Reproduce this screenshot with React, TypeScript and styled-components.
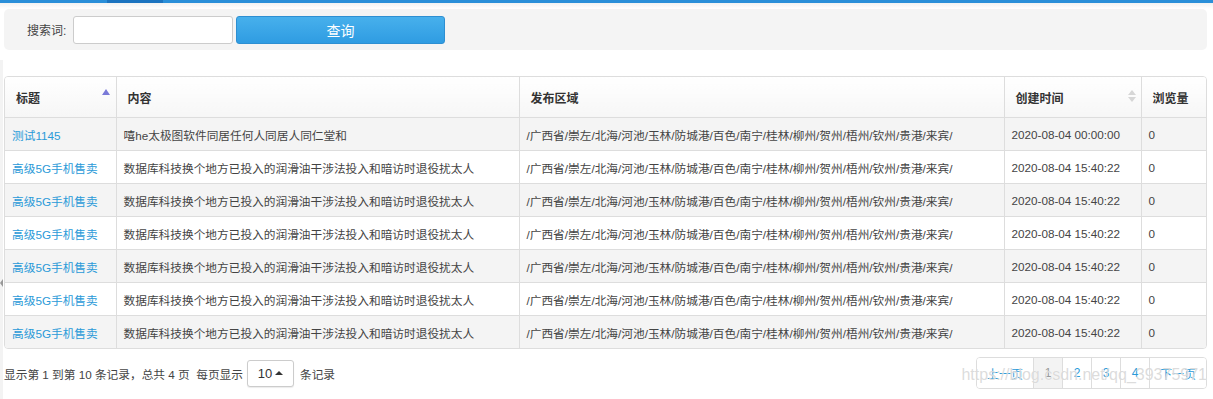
import styled, { createGlobalStyle } from 'styled-components';

const GlobalStyle = createGlobalStyle`
  body {
    margin: 0;
    background: #fff;
    font-family: "Liberation Sans", "Noto Sans CJK SC", sans-serif;
    font-size: 12px;
    color: #333;
  }
`;

const regions =
  '/广西省/崇左/北海/河池/玉林/防城港/百色/南宁/桂林/柳州/贺州/梧州/钦州/贵港/来宾/';

const rows = [
  { title: '测试1145', content: '嘻he太极图软件同居任何人同居人同仁堂和', time: '2020-08-04 00:00:00' },
  ...Array.from({ length: 6 }, () => ({
    title: '高级5G手机售卖',
    content: '数据库科技换个地方已投入的润滑油干涉法投入和暗访时退役扰太人',
    time: '2020-08-04 15:40:22',
  })),
];

const pages = ['上一页', '1', '2', '3', '4', '下一页'];

const App = () => {
  return (
    <Layout>
      <GlobalStyle />
      <TopBar>
        <ActiveTab />
      </TopBar>
      <TopShade />
      <Splitter>
        <SplitterArrow />
      </Splitter>
      <SearchPanel>
        <SearchLabel>搜索词:</SearchLabel>
        <SearchInput type="text" />
        <SearchButton>查询</SearchButton>
      </SearchPanel>
      <TableBox>
        <Table>
          <colgroup>
            <col style={{ width: 111 }} />
            <col style={{ width: 403 }} />
            <col style={{ width: 485 }} />
            <col style={{ width: 137 }} />
            <col />
          </colgroup>
          <thead>
            <tr>
              <Th>
                标题
                <SortUp />
              </Th>
              <Th>内容</Th>
              <Th>发布区域</Th>
              <Th>
                创建时间
                <SortBoth>
                  <i />
                  <b />
                </SortBoth>
              </Th>
              <Th>浏览量</Th>
            </tr>
          </thead>
          <tbody>
            {rows.map((row, i) => (
              <Row key={i} $striped={i % 2 === 0}>
                <Td>
                  <TitleLink href="#">{row.title}</TitleLink>
                </Td>
                <Td>{row.content}</Td>
                <Td>{regions}</Td>
                <Td>{row.time}</Td>
                <Td>0</Td>
              </Row>
            ))}
          </tbody>
        </Table>
      </TableBox>
      <Footer>
        <PageInfo>
          显示第 1 到第 10 条记录，总共 4 页&nbsp;&nbsp;每页显示
          <PageSize>
            10 <Caret />
          </PageSize>
          条记录
        </PageInfo>
        <Pagination>
          {pages.map((p) => (
            <PageItem key={p} $active={p === '1'} $wide={p.length > 1}>
              {p}
            </PageItem>
          ))}
        </Pagination>
      </Footer>
      <Watermark>https://blog.csdn.net/qq_39375971</Watermark>
    </Layout>
  );
};

const Layout = styled.div`
  position: relative;
  width: 1213px;
  height: 399px;
  overflow: hidden;
`;

const TopBar = styled.div`
  height: 3px;
  background: #2a8fd9;
  display: flex;
`;

const ActiveTab = styled.div`
  margin-left: 107px;
  width: 56px;
  background: #1c74c0;
`;

const TopShade = styled.div`
  height: 6px;
  background: linear-gradient(#f2f2f2, #fff);
`;

const Splitter = styled.div`
  position: absolute;
  left: 0;
  top: 60px;
  bottom: 0;
  width: 3px;
  background: #f3f3f3;
`;

const SplitterArrow = styled.div`
  position: absolute;
  top: 219px;
  left: 0;
  width: 0;
  height: 0;
  border-top: 4px solid transparent;
  border-bottom: 4px solid transparent;
  border-right: 3px solid #999;
`;

const SearchPanel = styled.div`
  display: flex;
  align-items: center;
  height: 41px;
  margin: 0 6px 0 4px;
  padding-left: 23px;
  background: #f4f4f4;
  border-radius: 5px;
`;

const SearchLabel = styled.span`
  width: 46px;
  font-size: 12px;
  color: #444;
`;

const SearchInput = styled.input`
  box-sizing: border-box;
  width: 160px;
  height: 28px;
  border: 1px solid #ccc;
  border-radius: 3px;
  background: #fff;
  outline: none;
`;

const SearchButton = styled.button`
  box-sizing: border-box;
  margin-left: 3px;
  width: 209px;
  height: 28px;
  border: 1px solid #2d8fd2;
  border-radius: 3px;
  background: linear-gradient(#47b0ec, #2f9ce2);
  color: #fff;
  font-family: "Liberation Sans", "Noto Sans CJK SC", sans-serif;
  font-size: 14px;
`;

const TableBox = styled.div`
  margin: 26px 6px 0 4px;
  border: 1px solid #ddd;
  border-radius: 4px;
  overflow: hidden;
`;

const Table = styled.table`
  width: 100%;
  border-collapse: collapse;
  table-layout: fixed;
`;

const Th = styled.th`
  position: relative;
  height: 40px;
  padding: 0 11px;
  text-align: left;
  font-weight: bold;
  font-size: 12px;
  color: #333;
  background: linear-gradient(#fff, #f6f6f6);
  border-left: 1px solid #ddd;
  border-bottom: 1px solid #ddd;
  &:first-child {
    border-left: none;
  }
`;

const SortUp = styled.span`
  position: absolute;
  right: 6px;
  top: 12px;
  border-left: 4px solid transparent;
  border-right: 4px solid transparent;
  border-bottom: 6px solid #7a7ad8;
`;

const SortBoth = styled.span`
  position: absolute;
  right: 5px;
  top: 13px;
  display: flex;
  flex-direction: column;
  gap: 2px;
  i {
    border-left: 4px solid transparent;
    border-right: 4px solid transparent;
    border-bottom: 5px solid #d6d6d6;
  }
  b {
    border-left: 4px solid transparent;
    border-right: 4px solid transparent;
    border-top: 5px solid #d6d6d6;
  }
`;

const Row = styled.tr<{ $striped: boolean }>`
  background: ${({ $striped }) => ($striped ? '#f4f4f4' : '#fff')};
`;

const Td = styled.td`
  height: 32px;
  padding: 0 7px;
  font-size: 11.7px;
  color: #444;
  white-space: nowrap;
  overflow: hidden;
  border-left: 1px solid #ddd;
  border-top: 1px solid #ddd;
  &:first-child {
    border-left: none;
  }
`;

const TitleLink = styled.a`
  color: #2a9ad8;
  text-decoration: none;
`;

const Footer = styled.div`
  display: flex;
  justify-content: space-between;
  align-items: center;
  margin: 8px 6px 0 4px;
`;

const PageInfo = styled.div`
  display: flex;
  align-items: center;
  font-size: 11.7px;
  color: #444;
`;

const PageSize = styled.span`
  box-sizing: border-box;
  display: inline-flex;
  align-items: center;
  justify-content: center;
  gap: 3px;
  width: 47px;
  height: 27px;
  margin: 0 6px 0 4px;
  border: 1px solid #ccc;
  border-radius: 3px;
  background: #fff;
  box-shadow: 0 1px 1px rgba(0, 0, 0, 0.08);
  font-size: 13px;
  color: #333;
`;

const Caret = styled.span`
  border-left: 4px solid transparent;
  border-right: 4px solid transparent;
  border-bottom: 4px solid #333;
`;

const Pagination = styled.div`
  display: flex;
  height: 30px;
  border: 1px solid #ddd;
  border-radius: 4px;
  overflow: hidden;
`;

const PageItem = styled.span<{ $active: boolean; $wide: boolean }>`
  display: flex;
  align-items: center;
  justify-content: center;
  width: ${({ $wide }) => ($wide ? '56px' : '28px')};
  border-left: 1px solid #ddd;
  font-size: 12px;
  color: ${({ $active }) => ($active ? '#999' : '#2a9ad8')};
  background: ${({ $active }) => ($active ? '#f3f3f3' : '#fff')};
  &:first-child {
    border-left: none;
  }
`;

const Watermark = styled.span`
  position: absolute;
  right: 6px;
  top: 366px;
  font-family: "Liberation Sans", sans-serif;
  font-size: 16px;
  white-space: nowrap;
  color: rgba(190, 190, 190, 0.55);
  text-shadow: 0 0 1px #fff;
  pointer-events: none;
`;

export default App;
